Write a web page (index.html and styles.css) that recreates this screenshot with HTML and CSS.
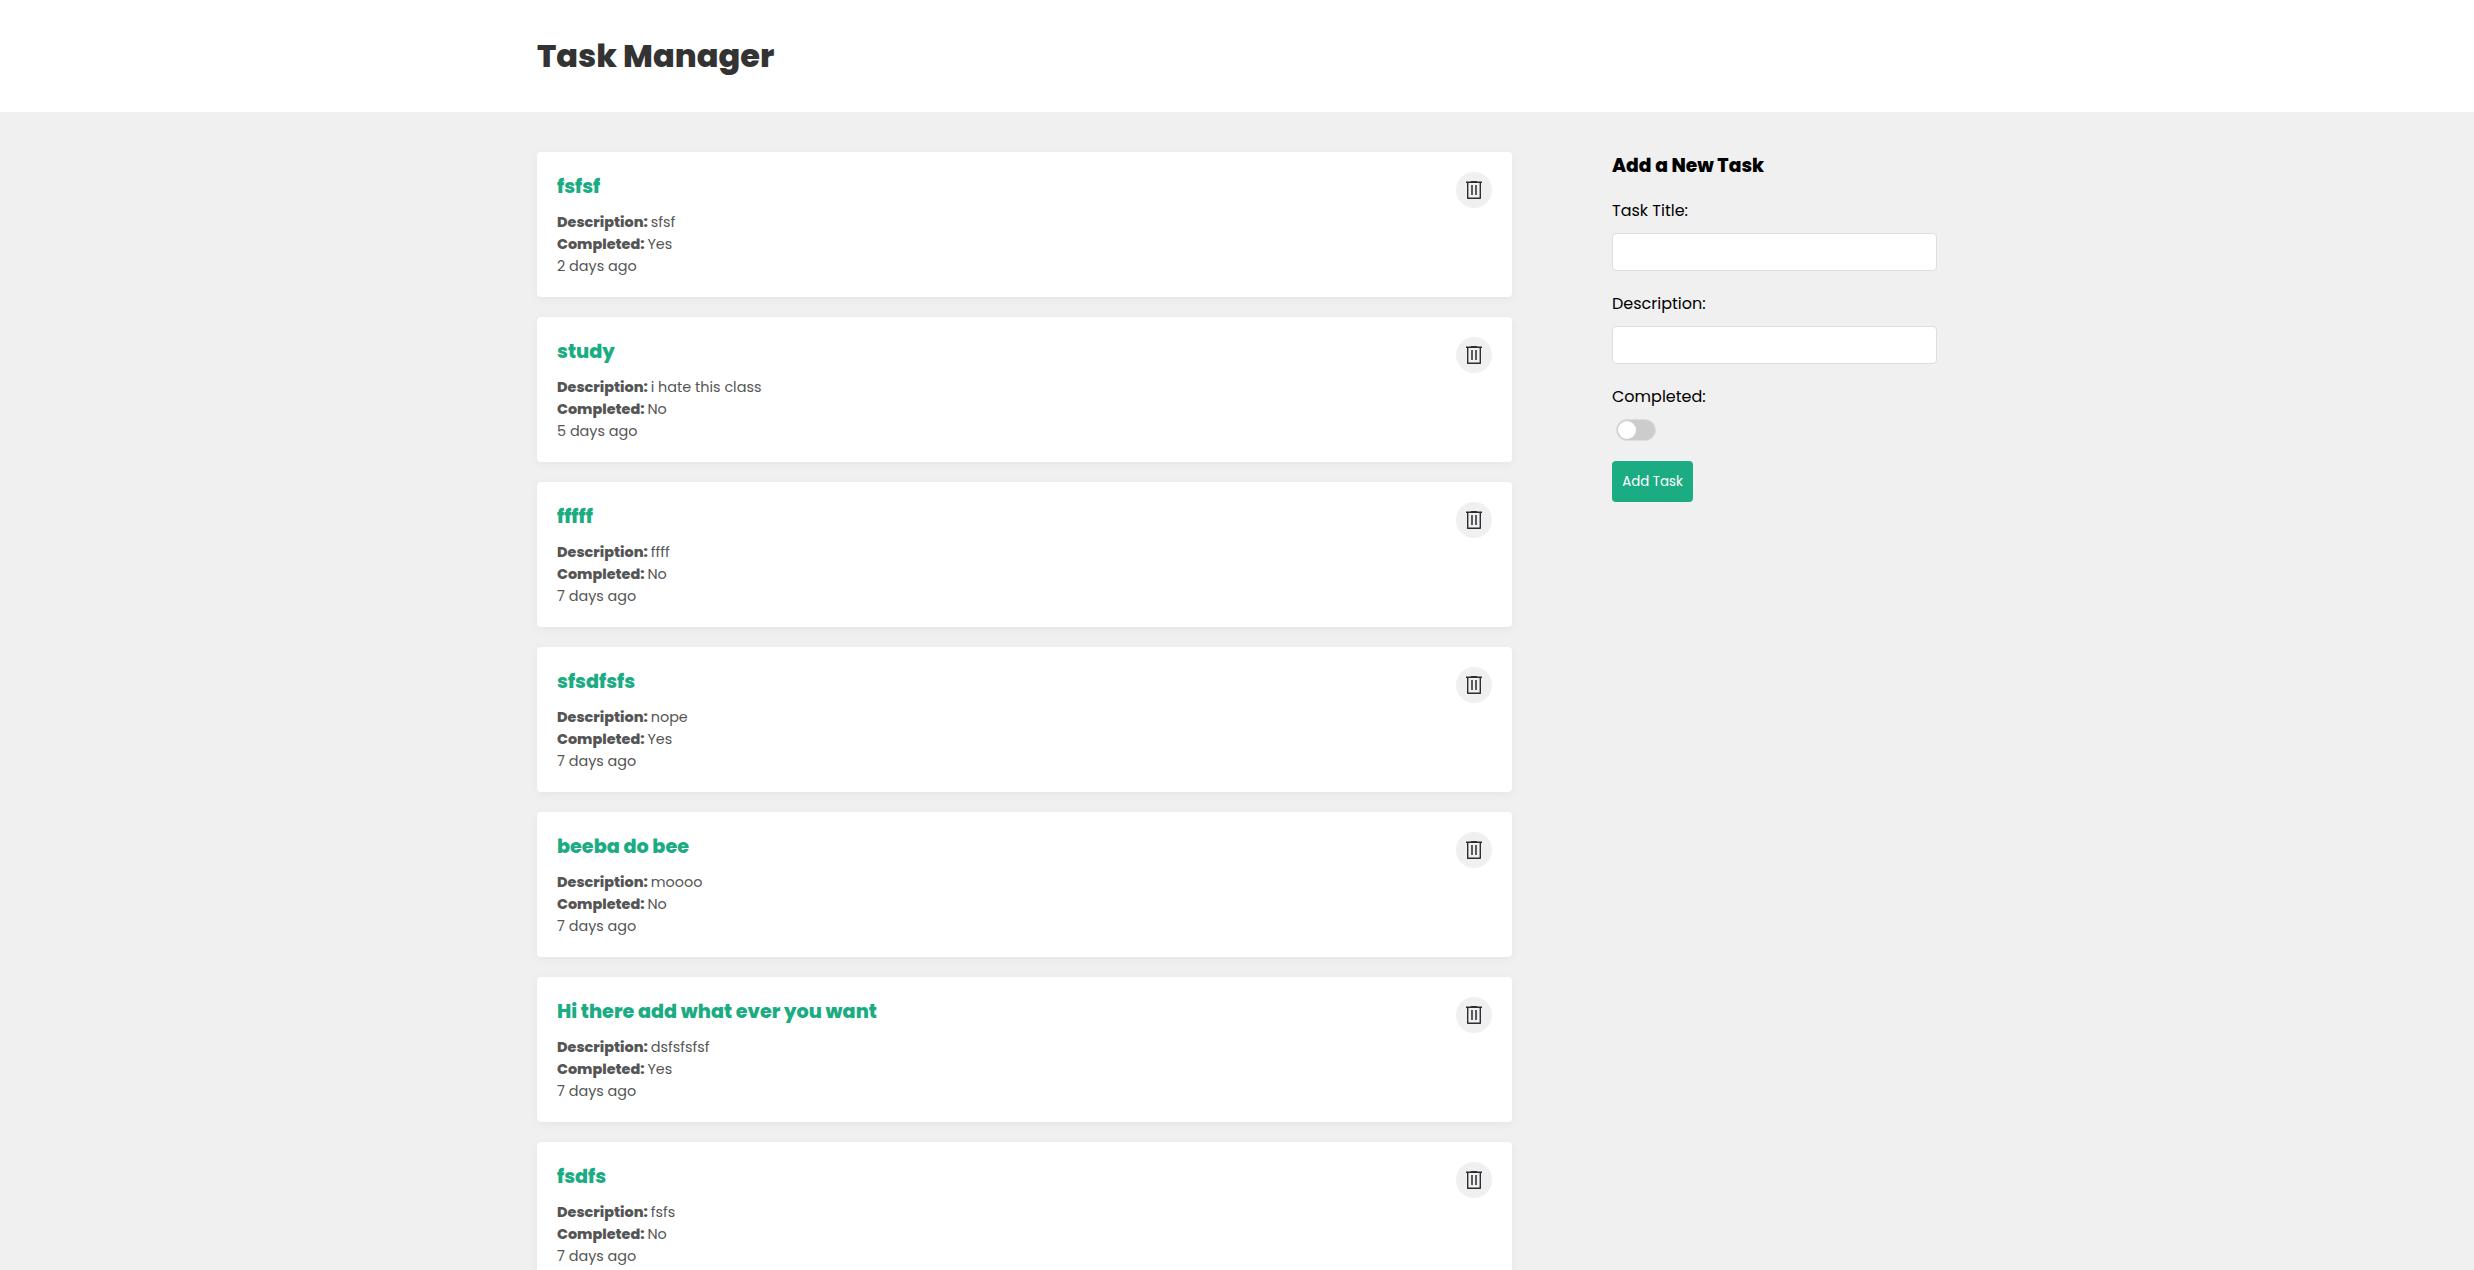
FILE: index.html
```html
<!DOCTYPE html>
<html lang="en">
<head>
<meta charset="utf-8">
<title>Task Manager</title>
<link rel="stylesheet" href="styles.css">
</head>
<body>
<svg class="sprite" aria-hidden="true">
  <symbol id="trash" viewBox="0 0 18 20">
    <path fill="#2d2d33" d="M1 1.500h4.500l.8-.5h5.400l.8.500H17V3H1z"/>
    <path fill="none" stroke="#2d2d33" stroke-width="1.400" stroke-linejoin="round" d="M2.700 2v16.300h12.600V2"/>
    <path fill="none" stroke="#4c4c50" stroke-width="1.800" d="M7 5v10M11 5v10"/>
  </symbol>
</svg>
<header class="header"><div class="container"><h1 class="header-title">Task Manager</h1></div></header>
<main class="container layout">
  <section class="tasks">
    <article class="task">
      <div><h3 class="task-title">fsfsf</h3><p><strong>Description:</strong> sfsf</p><p><strong>Completed:</strong> Yes</p><p>2 days ago</p></div>
      <button class="delete" aria-label="Delete"><svg class="delete-icon"><use href="#trash"/></svg></button>
    </article>
    <article class="task">
      <div><h3 class="task-title">study</h3><p><strong>Description:</strong> i hate this class</p><p><strong>Completed:</strong> No</p><p>5 days ago</p></div>
      <button class="delete" aria-label="Delete"><svg class="delete-icon"><use href="#trash"/></svg></button>
    </article>
    <article class="task">
      <div><h3 class="task-title">fffff</h3><p><strong>Description:</strong> ffff</p><p><strong>Completed:</strong> No</p><p>7 days ago</p></div>
      <button class="delete" aria-label="Delete"><svg class="delete-icon"><use href="#trash"/></svg></button>
    </article>
    <article class="task">
      <div><h3 class="task-title">sfsdfsfs</h3><p><strong>Description:</strong> nope</p><p><strong>Completed:</strong> Yes</p><p>7 days ago</p></div>
      <button class="delete" aria-label="Delete"><svg class="delete-icon"><use href="#trash"/></svg></button>
    </article>
    <article class="task">
      <div><h3 class="task-title">beeba do bee</h3><p><strong>Description:</strong> moooo</p><p><strong>Completed:</strong> No</p><p>7 days ago</p></div>
      <button class="delete" aria-label="Delete"><svg class="delete-icon"><use href="#trash"/></svg></button>
    </article>
    <article class="task">
      <div><h3 class="task-title">Hi there add what ever you want</h3><p><strong>Description:</strong> dsfsfsfsf</p><p><strong>Completed:</strong> Yes</p><p>7 days ago</p></div>
      <button class="delete" aria-label="Delete"><svg class="delete-icon"><use href="#trash"/></svg></button>
    </article>
    <article class="task">
      <div><h3 class="task-title">fsdfs</h3><p><strong>Description:</strong> fsfs</p><p><strong>Completed:</strong> No</p><p>7 days ago</p></div>
      <button class="delete" aria-label="Delete"><svg class="delete-icon"><use href="#trash"/></svg></button>
    </article>
  </section>
  <form class="form">
    <h3 class="form-title">Add a New Task</h3>
    <label class="label" for="title">Task Title:</label>
    <input class="input" id="title" type="text">
    <label class="label" for="description">Description:</label>
    <input class="input" id="description" type="text">
    <label class="label" for="completed">Completed:</label>
    <button class="toggle" id="completed" type="button" role="switch" aria-checked="false"><span class="knob"></span></button>
    <button class="submit" type="button">Add Task</button>
  </form>
</main>
</body>
</html>
```
FILE: styles.css
```css
* { box-sizing: border-box; margin: 0; padding: 0; }
html { overflow: hidden; }
body {
  height: 1270px;
  overflow: hidden;
  background: #f0f0f0;
  color: #000;
  font: 16px/24px Poppins, Inter, sans-serif;
}
.sprite { display: none; }
.container { width: 1400px; margin: 0 auto; }
.header { height: 112px; padding: 32px 0; background: #fff; }
.header-title { font-size: 32px; line-height: 48px; font-weight: 800; color: #333; }
.layout { display: flex; gap: 100px; padding-top: 40px; }
.tasks { display: flex; flex-direction: column; gap: 20px; width: 975px; }
.task {
  display: flex;
  justify-content: space-between;
  align-items: flex-start;
  height: 145px;
  padding: 20px;
  background: #fff;
  border-radius: 4px;
  box-shadow: 0 2px 10px rgba(0, 0, 0, .05);
  color: #555;
  font-size: 14.4px;
  line-height: 22px;
}
.task strong { margin-right: -1px; font-weight: 800; }
.task-title { margin-bottom: 10px; font-size: 19.2px; line-height: 29px; font-weight: 800; color: #1bac83; }
.delete {
  display: flex;
  align-items: center;
  justify-content: center;
  width: 36px;
  height: 36px;
  border: 0;
  border-radius: 50%;
  background: #f0f0f0;
}
.delete-icon { width: 18px; height: 20px; }
.form { display: flex; flex-direction: column; align-items: flex-start; width: 325px; }
.form-title { margin-bottom: 19px; font-size: 18.72px; line-height: 28px; font-weight: 800; }
.label { margin-bottom: 10px; }
.input { width: 325px; height: 38px; margin-bottom: 21px; border: 1px solid #ddd; border-radius: 4px; background: #fff; }
.toggle {
  display: flex;
  width: 40px;
  height: 22px;
  margin: 0 0 20px 4px;
  padding: 1px;
  border: 1px solid #ddd;
  border-radius: 11px;
  background: #ccc;
}
.knob { width: 18px; height: 18px; border-radius: 50%; background: #fff; }
.submit {
  width: 81px;
  height: 41px;
  border: 0;
  border-radius: 4px;
  background: #1bac83;
  color: #fff;
  font: 13.333px/20px Poppins, Inter, sans-serif;
}
```
